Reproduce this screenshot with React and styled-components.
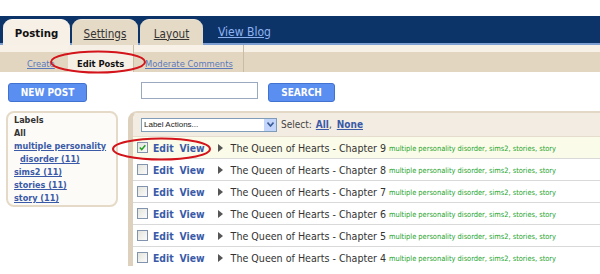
import React from "react";
import styled, { createGlobalStyle } from "styled-components";

const GlobalStyle = createGlobalStyle`
  html, body {
    margin: 0;
    padding: 0;
    background: #ffffff;
  }
  body {
    font-family: "DejaVu Sans Condensed", "DejaVu Sans", Verdana, sans-serif;
    width: 600px;
    height: 274px;
    overflow: hidden;
  }
`;

const Page = styled.div`
  position: relative;
  width: 600px;
  height: 274px;
  padding-top: 16px;
  box-sizing: border-box;
`;

const TabBar = styled.div`
  height: 29px;
  background: #0d3469;
  box-shadow: inset 0 -2px 0 #7f9fd3;
  display: flex;
  align-items: flex-end;
  padding-left: 3px;
  gap: 2px;
`;

const Tab = styled.a`
  height: 26px;
  width: ${(p) => p.$w}px;
  box-sizing: border-box;
  border-radius: 9px 9px 0 0;
  display: flex;
  align-items: center;
  justify-content: center;
  background: ${(p) => (p.$active ? "#f7f0e6" : "#e5dac6")};
  color: ${(p) => (p.$active ? "#111" : "#333")};
  font-weight: ${(p) => (p.$active ? "bold" : "normal")};
  text-decoration: ${(p) => (p.$active ? "none" : "underline")};
  font-size: ${(p) => (p.$active ? "11.3px" : "11.6px")};
  padding-top: 2px;
  border-top: 1px solid ${(p) => (p.$active ? "#fbf7f0" : "#efe6d7")};
`;

const BlogLink = styled.a`
  color: #8fb3f2;
  text-decoration: underline;
  font-size: 12px;
  margin-left: 13px;
  align-self: center;
  margin-top: 2px;
`;

const SubNav = styled.div`
  height: 27px;
  background: linear-gradient(#f8f1e8 0 7px, #e3d6c1 7px);
  display: flex;
  align-items: stretch;
  font-size: 9.3px;
`;

const SubItem = styled.a`
  display: flex;
  align-items: center;
  padding: 10px ${(p) => p.$pr || 0}px 0 ${(p) => p.$pl || 0}px;
  width: ${(p) => p.$w}px;
  box-sizing: border-box;
  background: ${(p) => (p.$active ? "#f6efe6" : "transparent")};
  border-right: ${(p) => (p.$sep ? "1px solid #cbbca4" : "none")};
  color: ${(p) => (p.$active ? "#111" : "#5a79bb")};
  font-weight: ${(p) => (p.$active ? "bold" : "normal")};
  text-decoration: ${(p) => (p.$active ? "none" : "underline")};
`;

const Content = styled.div`
  display: grid;
  grid-template-columns: 112px 1fr;
  column-gap: 10px;
  padding: 8px 0 0 6px;
`;

const ToolCell = styled.div`
  display: flex;
  align-items: center;
  height: 21px;
  padding-left: ${(p) => p.$pl || 0}px;
  gap: 10px;
`;

const BlueButton = styled.button`
  height: 19px;
  width: ${(p) => p.$w}px;
  background: #5a8ef0;
  border: 1px solid #4272cf;
  border-radius: 3px;
  color: #ffffff;
  font-family: inherit;
  font-weight: bold;
  font-size: 10px;
  padding: 0;
  margin-top: 4px;
`;

const SearchInput = styled.input`
  width: 117px;
  height: 17px;
  box-sizing: border-box;
  border: 1px solid #9aa9bd;
  background: #fff;
  margin-top: -1px;
`;

const Sidebar = styled.div`
  margin-top: 10px;
  width: 112px;
  height: 96px;
  box-sizing: border-box;
  border: 2px solid #e5dac7;
  border-radius: 8px;
  background: #fdfbf7;
  padding: 1px 0 0 6px;
  font-size: 9px;
  font-weight: bold;
  line-height: 13px;
`;

const LabelHead = styled.div`
  color: #333;
`;

const LabelLink = styled.a`
  display: block;
  color: #3a5aa8;
  text-decoration: underline;
  padding-left: ${(p) => (p.$indent ? 6 : 0)}px;
`;

const Main = styled.div`
  margin-top: 10px;
  border-left: 5px solid #ddd1bd;
  border-top: 2px solid #e3d8c5;
  border-top-left-radius: 9px;
  height: 153px;
  overflow: hidden;
`;

const MainHead = styled.div`
  height: 23px;
  background: #f3ece2;
  display: flex;
  align-items: center;
  padding-left: 8px;
  border-bottom: 1px solid #e6dccd;
  font-size: 10px;
  color: #444;
`;

const FakeSelect = styled.div`
  width: 136px;
  height: 14px;
  box-sizing: border-box;
  border: 1px solid #7f9db9;
  background: #fff;
  display: flex;
  align-items: center;
  font-family: "Liberation Sans", Arial, sans-serif;
  font-size: 8px;
  color: #222;
  padding-left: 2px;
  margin-right: 4px;
`;

const SelectText = styled.span`
  flex: 1;
`;

const SelectArrow = styled.span`
  width: 12px;
  height: 12px;
  background: #c3d5fb;
  display: flex;
  align-items: center;
  justify-content: center;
`;

const BoldLink = styled.a`
  color: #3a5aa8;
  font-weight: bold;
  text-decoration: underline;
  margin-left: ${(p) => p.$ml || 0}px;
`;

const Row = styled.div`
  height: 22px;
  box-sizing: border-box;
  border-bottom: 1px solid #d9d9d9;
  background: ${(p) => (p.$hl ? "#fbfbe9" : "#ffffff")};
  display: flex;
  align-items: center;
  padding-left: 4px;
  white-space: nowrap;
`;

const Check = styled.span`
  width: 11px;
  height: 11px;
  box-sizing: border-box;
  border: 1px solid #8193ad;
  background: linear-gradient(135deg, #e4e4dd, #fafafa);
  display: flex;
  align-items: center;
  justify-content: center;
  margin-right: 5px;
`;

const ActionLink = styled.a`
  color: #3a5aa8;
  font-weight: bold;
  font-size: 10.3px;
  margin-right: ${(p) => p.$mr}px;
`;

const Arrow = styled.span`
  width: 0;
  height: 0;
  border-top: 4px solid transparent;
  border-bottom: 4px solid transparent;
  border-left: 5px solid #555;
  margin-right: 8px;
`;

const Title = styled.span`
  color: #333;
  font-size: 10.6px;
`;

const Tags = styled.span`
  color: #22a32a;
  font-size: 7.4px;
  margin-left: 3px;
  margin-top: 2px;
`;

const Marks = styled.svg`
  position: absolute;
  left: 0;
  top: 0;
  pointer-events: none;
`;

const chapters = [9, 8, 7, 6, 5, 4];

export default function App() {
  return (
    <Page>
      <GlobalStyle />
      <TabBar>
        <Tab $active $w={67}>Posting</Tab>
        <Tab $w={66}>Settings</Tab>
        <Tab $w={63}>Layout</Tab>
        <BlogLink>View Blog</BlogLink>
      </TabBar>
      <SubNav>
        <SubItem $w={68} $pl={27}>Create</SubItem>
        <SubItem $active $sep $w={66} $pl={9}>Edit Posts</SubItem>
        <SubItem $sep $w={110} $pl={11}>Moderate Comments</SubItem>
      </SubNav>
      <Content>
        <ToolCell $pl={2}>
          <BlueButton $w={79}>NEW POST</BlueButton>
        </ToolCell>
        <ToolCell $pl={13}>
          <SearchInput />
          <BlueButton $w={67}>SEARCH</BlueButton>
        </ToolCell>
        <Sidebar>
          <LabelHead>Labels</LabelHead>
          <LabelHead>All</LabelHead>
          <LabelLink>multiple personality</LabelLink>
          <LabelLink $indent>disorder (11)</LabelLink>
          <LabelLink>sims2 (11)</LabelLink>
          <LabelLink>stories (11)</LabelLink>
          <LabelLink>story (11)</LabelLink>
        </Sidebar>
        <Main>
          <MainHead>
            <FakeSelect>
              <SelectText>Label Actions...</SelectText>
              <SelectArrow>
                <svg width="7" height="5" viewBox="0 0 7 5">
                  <path d="M0.5 0.5 L3.5 4 L6.5 0.5" fill="none" stroke="#3b5a96" strokeWidth="1.6" />
                </svg>
              </SelectArrow>
            </FakeSelect>
            Select:
            <BoldLink $ml={4}>All</BoldLink>,
            <BoldLink $ml={5}>None</BoldLink>
          </MainHead>
          {chapters.map((n, i) => (
            <Row key={n} $hl={i === 0}>
              <Check>
                {i === 0 && (
                  <svg width="7" height="7" viewBox="0 0 7 7">
                    <path d="M0.8 3.6 L2.7 5.6 L6.3 1.2" fill="none" stroke="#21a121" strokeWidth="1.5" />
                  </svg>
                )}
              </Check>
              <ActionLink $mr={6}>Edit</ActionLink>
              <ActionLink $mr={13}>View</ActionLink>
              <Arrow />
              <Title>The Queen of Hearts - Chapter {n}</Title>
              <Tags>multiple personality disorder, sims2, stories, story</Tags>
            </Row>
          ))}
        </Main>
      </Content>
      <Marks width="600" height="274">
        <ellipse cx="98" cy="62" rx="47" ry="10.5" fill="none" stroke="#d3141b" strokeWidth="2" />
        <ellipse cx="161.5" cy="149" rx="48.5" ry="10.5" fill="none" stroke="#d3141b" strokeWidth="2" />
      </Marks>
    </Page>
  );
}
